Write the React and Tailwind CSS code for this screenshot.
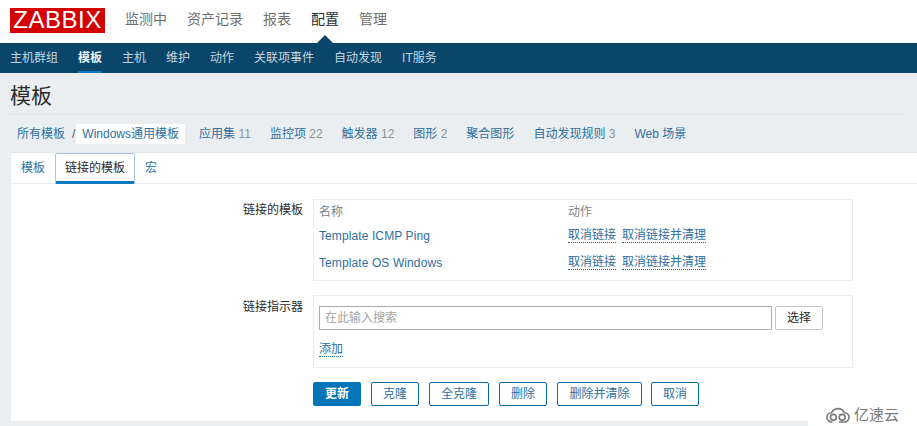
import React from "react";

const font = { fontFamily: '"Liberation Sans", "Noto Sans CJK SC", sans-serif' };

const topMenu = ["监测中", "资产记录", "报表", "配置", "管理"];
const subMenu = ["主机群组", "模板", "主机", "维护", "动作", "关联项事件", "自动发现", "IT服务"];
const crumbs = [
  ["应用集", "11"],
  ["监控项", "22"],
  ["触发器", "12"],
  ["图形", "2"],
  ["聚合图形", ""],
  ["自动发现规则", "3"],
  ["Web 场景", ""],
];
const actions = [
  ["克隆", "w-[48px]"],
  ["全克隆", "w-[60px]"],
  ["删除", "w-[48px]"],
  ["删除并清除", "w-[85px]"],
  ["取消", "w-[48px]"],
];

function TemplateRow({ name }) {
  return (
    <div className="flex h-[27px] items-center">
      <a className="w-[249px] tracking-[0.1px] text-[#2f6f9f]">{name}</a>
      <a className="border-b border-dotted border-[#0b6ea8] leading-[14px] text-[#2f6f9f]">取消链接</a>
      <a className="ml-[6px] border-b border-dotted border-[#0b6ea8] leading-[14px] text-[#2f6f9f]">取消链接并清理</a>
    </div>
  );
}

export default function App() {
  return (
    <div className="relative flex h-[426px] w-[917px] flex-col overflow-hidden bg-[#ebeef0] text-[12px]" style={font}>
      {/* top bar */}
      <header className="flex h-[43px] shrink-0 items-center bg-white pl-[10px]">
        <div className="mb-[3px] flex h-[25px] w-[95px] items-center justify-center bg-[#d40000] text-[24px] leading-none tracking-[0.5px] text-white">
          ZABBIX
        </div>
        <nav className="mb-[4px] ml-[20px] flex gap-[20px] text-[14px]">
          {topMenu.map((m) => (
            <span key={m} className={m === "配置" ? "text-[#2b2b2b]" : "text-[#6f6f6f]"}>{m}</span>
          ))}
        </nav>
      </header>

      {/* sub menu */}
      <nav className="relative flex h-[30px] shrink-0 items-stretch gap-[20px] bg-[#0a466a] pl-[10px]">
        <div className="absolute left-[317px] top-[-8px] h-0 w-0 border-x-[8px] border-b-[8px] border-x-transparent border-b-[#0a466a]" />
        {subMenu.map((m) => (
          <span
            key={m}
            className={
              m === "模板"
                ? "flex items-center border-b-2 border-[#0b7ac0] pt-[2px] font-bold text-[#e8f0f5]"
                : "flex items-center text-[#c5d6e0]"
            }
          >
            {m}
          </span>
        ))}
      </nav>

      {/* title */}
      <div className="mx-[10px] h-[42px] shrink-0 border-b border-[#dfe4e7] pt-[7px] text-[21px] leading-[32px] text-[#2b2b2b]">
        模板
      </div>

      {/* breadcrumb */}
      <div className="flex h-[37px] shrink-0 items-center pl-[17px] pt-[1px] text-[#2f6f9f]">
        <span>所有模板</span>
        <span className="ml-[7px] text-[#555]">/</span>
        <span className="ml-[1px] bg-white px-[6px] py-[3px] leading-[14px]">Windows通用模板</span>
        <div className="ml-[14px] flex gap-[19px]">
          {crumbs.map(([label, n]) => (
            <span key={label}>
              {label}
              {n && <span className="text-[#8a9298]"> {n}</span>}
            </span>
          ))}
        </div>
      </div>

      {/* card */}
      <main className="ml-[11px] h-[269px] shrink-0 border-t border-[#dfe4e7] bg-white">
        <div className="flex h-[31px] items-stretch border-b border-[#ebeef0] pl-[10px]">
          <a className="flex w-[34px] items-center text-[#2f6f9f]">模板</a>
          <div className="mb-[-1px] flex w-[80px] items-center justify-center rounded-[2px] border border-[#a9c4e8] border-b-[3px] border-b-[#0b7ac0] text-[#2b2b2b]">
            链接的模板
          </div>
          <a className="ml-[10px] flex items-center text-[#2f6f9f]">宏</a>
        </div>

        {/* form */}
        <div className="mt-[15px] flex">
          <div className="w-[292px] pt-[3px] text-right leading-[16px] text-[#2b2b2b]">链接的模板</div>
          <div className="ml-[10px] h-[82px] w-[540px] border border-[#ebeef0] px-[5px]">
            <div className="flex h-[22px] items-center pt-[2px] text-[#7d8489]">
              <span className="w-[249px]">名称</span>
              <span>动作</span>
            </div>
            <TemplateRow name="Template ICMP Ping" />
            <TemplateRow name="Template OS Windows" />
          </div>
        </div>

        <div className="mt-[14px] flex">
          <div className="w-[292px] pt-[4px] text-right leading-[16px] text-[#2b2b2b]">链接指示器</div>
          <div className="ml-[10px] h-[73px] w-[540px] border border-[#ebeef0] px-[5px] pt-[10px]">
            <div className="flex items-center">
              <div className="flex h-[24px] w-[453px] items-center border border-[#acacac] px-[5px] text-[#a5a5a5]">
                在此输入搜索
              </div>
              <button className="ml-[3px] h-[24px] w-[48px] rounded-[2px] border border-[#c4c4c4] text-[#2b2b2b]">选择</button>
            </div>
            <a className="mt-[12px] inline-block border-b border-dotted border-[#0b6ea8] leading-[14px] text-[#2f6f9f]">添加</a>
          </div>
        </div>

        <div className="ml-[302px] mt-[14px] flex gap-[10px]">
          <button className="h-[24px] w-[48px] rounded-[2px] bg-[#0275b8] font-bold text-white">更新</button>
          {actions.map(([label, w], i) => (
            <button
              key={label}
              className={`h-[24px] ${w} rounded-[2px] border border-[#0a6a9e] text-[#2f6f9f] ${i === 4 ? "ml-[-1px]" : ""}`}
            >
              {label}
            </button>
          ))}
        </div>
      </main>

      {/* watermark */}
      <div className="absolute bottom-0 right-0 flex h-[22px] w-[109px] items-center gap-[4px] bg-white pl-[18px] text-[15px] text-[#7b7b7b]">
        <svg width="24" height="17" viewBox="0 0 26 17" fill="none" stroke="#7b7b7b" strokeWidth="1.8">
          <path d="M7 15.5H6a5 5 0 0 1 0-10c1.5-3 4-4.5 7-4.5s5.5 1.5 7 4.5a5 5 0 0 1 0 10h-6" />
          <circle cx="8" cy="10.5" r="3.2" />
          <circle cx="17.5" cy="10.5" r="3.2" />
        </svg>
        <span>亿速云</span>
      </div>
    </div>
  );
}
